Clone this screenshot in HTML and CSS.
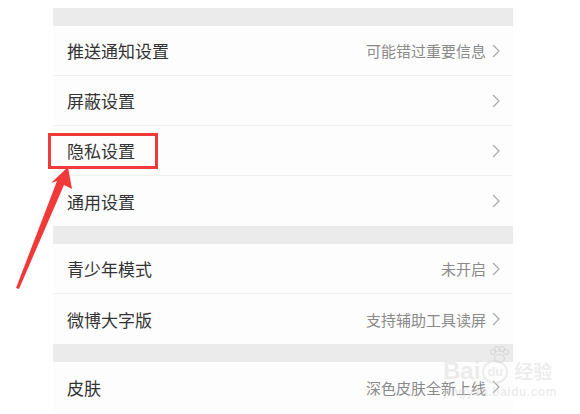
FILE: index.html
```html
<!DOCTYPE html>
<html lang="zh-CN">
<head>
<meta charset="UTF-8">
<meta name="viewport" content="width=device-width, initial-scale=1.0">
<title>设置</title>
<link rel="stylesheet" href="styles.css">
</head>
<body>
    <div class="settings">
        <div class="group">
            <div class="row"><span class="label">推送通知设置</span><span class="value">可能错过重要信息</span><svg class="chev" viewBox="0 0 8 14"><polyline points="1,1 7,7 1,13"/></svg></div>
            <div class="row"><span class="label">屏蔽设置</span><span class="value"></span><svg class="chev" viewBox="0 0 8 14"><polyline points="1,1 7,7 1,13"/></svg></div>
            <div class="row"><span class="label">隐私设置</span><span class="value"></span><svg class="chev" viewBox="0 0 8 14"><polyline points="1,1 7,7 1,13"/></svg></div>
            <div class="row"><span class="label">通用设置</span><span class="value"></span><svg class="chev" viewBox="0 0 8 14"><polyline points="1,1 7,7 1,13"/></svg></div>
        </div>
        <div class="group">
            <div class="row"><span class="label">青少年模式</span><span class="value">未开启</span><svg class="chev" viewBox="0 0 8 14"><polyline points="1,1 7,7 1,13"/></svg></div>
            <div class="row"><span class="label">微博大字版</span><span class="value">支持辅助工具读屏</span><svg class="chev" viewBox="0 0 8 14"><polyline points="1,1 7,7 1,13"/></svg></div>
        </div>
        <div class="group">
            <div class="row"><span class="label">皮肤</span><span class="value">深色皮肤全新上线</span><svg class="chev" viewBox="0 0 8 14"><polyline points="1,1 7,7 1,13"/></svg></div>
        </div>
    </div>

    <!-- 标注 -->
    <div class="mark-box"></div>
    <svg class="mark-arrow" width="80" height="300" viewBox="0 0 80 300">
        <polygon points="68,167 72,189 64,185 19,289 16,288 57,181 51,183"/>
    </svg>

    <div class="watermark">
        <svg class="wm-paw" width="22" height="18" viewBox="0 0 22 18">
            <circle cx="5" cy="6" r="2.5"/><circle cx="9" cy="3" r="2.5"/><circle cx="14" cy="3" r="2.5"/><circle cx="18" cy="6" r="2.5"/>
            <ellipse cx="11.5" cy="12.5" rx="5" ry="4"/>
        </svg>
        <div class="wm-top"><span class="wm-bai">Bai</span><span class="wm-du">du</span><span class="wm-jy">经验</span></div>
        <div class="wm-url">jingyan.baidu.com</div>
    </div>
</body>
</html>
```

FILE: styles.css
```css
body {
    margin: 0;
    background-color: #ffffff;
    font-family: "Noto Sans CJK SC", "Noto Sans", sans-serif;
}

.settings {
    width: 460px;
    margin: 8px 0 0 53px;
    background-color: #fdfdfd;
}

.group {
    border-top: 18px solid #ebebeb;
}

.row {
    display: flex;
    align-items: center;
    height: 50px;
    padding: 0 13px 0 14px;
    border-bottom: 1px solid #f1f1f1;
    box-sizing: border-box;
}

.group .row:last-child {
    border-bottom: none;
}

.label {
    font-size: 17px;
    color: #333333;
    flex: 1;
}

.value {
    font-size: 15px;
    color: #8a8a8a;
    margin-right: 6px;
}

.chev {
    width: 8px;
    height: 14px;
    fill: none;
    stroke: #a8a8a8;
    stroke-width: 1.2;
}

.mark-box {
    position: absolute;
    left: 48px;
    top: 133px;
    width: 104px;
    height: 30px;
    border: 3px solid #f03a3a;
}

.mark-arrow {
    position: absolute;
    left: 0;
    top: 0;
    fill: #f03a3a;
}

/* 水印 */
.watermark {
    position: absolute;
    left: 443px;
    top: 346px;
    color: rgba(215, 215, 215, 0.45);
    font-family: "Liberation Sans", sans-serif;
    font-weight: bold;
    pointer-events: none;
}

.wm-paw {
    display: block;
    margin-left: 45px;
    fill: none;
    stroke: rgba(205, 205, 205, 0.6);
    stroke-width: 1.2;
}

.wm-top {
    display: flex;
    align-items: flex-end;
    gap: 2px;
    margin-top: -6px;
}

.wm-bai {
    font-size: 24px;
    line-height: 26px;
}

.wm-du {
    font-size: 13px;
    line-height: 20px;
    width: 22px;
    height: 20px;
    text-align: center;
    border: 2px solid rgba(215, 215, 215, 0.45);
    border-radius: 50%;
}

.wm-jy {
    font-family: "Noto Sans CJK SC", sans-serif;
    font-size: 19px;
    line-height: 26px;
    margin-left: 4px;
}

.wm-url {
    font-size: 12px;
    margin-top: 1px;
    letter-spacing: 0.5px;
}
```
